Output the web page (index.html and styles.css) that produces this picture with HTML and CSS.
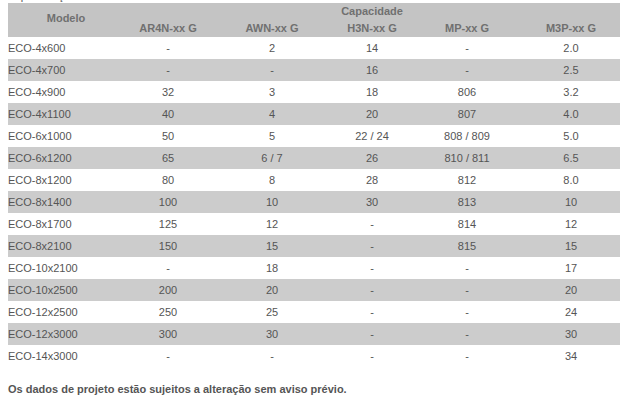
FILE: index.html
```html
<!DOCTYPE html>
<html lang="pt">
<head>
<meta charset="utf-8">
<link rel="stylesheet" href="styles.css">
</head>
<body>
<div class="page">
  <p class="cut">Especificação</p>
  <table class="spec">
    <colgroup>
      <col class="c-model"><col class="c1"><col class="c2"><col class="c3"><col class="c4"><col class="c5">
    </colgroup>
    <thead>
      <tr><th rowspan="2" class="model">Modelo</th><th colspan="5" class="cap">Capacidade</th></tr>
      <tr><th>AR4N-xx G</th><th>AWN-xx G</th><th>H3N-xx G</th><th>MP-xx G</th><th>M3P-xx G</th></tr>
    </thead>
    <tbody>
      <tr><td>ECO-4x600</td><td>-</td><td>2</td><td>14</td><td>-</td><td>2.0</td></tr>
      <tr><td>ECO-4x700</td><td>-</td><td>-</td><td>16</td><td>-</td><td>2.5</td></tr>
      <tr><td>ECO-4x900</td><td>32</td><td>3</td><td>18</td><td>806</td><td>3.2</td></tr>
      <tr><td>ECO-4x1100</td><td>40</td><td>4</td><td>20</td><td>807</td><td>4.0</td></tr>
      <tr><td>ECO-6x1000</td><td>50</td><td>5</td><td>22 / 24</td><td>808 / 809</td><td>5.0</td></tr>
      <tr><td>ECO-6x1200</td><td>65</td><td>6 / 7</td><td>26</td><td>810 / 811</td><td>6.5</td></tr>
      <tr><td>ECO-8x1200</td><td>80</td><td>8</td><td>28</td><td>812</td><td>8.0</td></tr>
      <tr><td>ECO-8x1400</td><td>100</td><td>10</td><td>30</td><td>813</td><td>10</td></tr>
      <tr><td>ECO-8x1700</td><td>125</td><td>12</td><td>-</td><td>814</td><td>12</td></tr>
      <tr><td>ECO-8x2100</td><td>150</td><td>15</td><td>-</td><td>815</td><td>15</td></tr>
      <tr><td>ECO-10x2100</td><td>-</td><td>18</td><td>-</td><td>-</td><td>17</td></tr>
      <tr><td>ECO-10x2500</td><td>200</td><td>20</td><td>-</td><td>-</td><td>20</td></tr>
      <tr><td>ECO-12x2500</td><td>250</td><td>25</td><td>-</td><td>-</td><td>24</td></tr>
      <tr><td>ECO-12x3000</td><td>300</td><td>30</td><td>-</td><td>-</td><td>30</td></tr>
      <tr><td>ECO-14x3000</td><td>-</td><td>-</td><td>-</td><td>-</td><td>34</td></tr>
    </tbody>
  </table>
  <p class="note">Os dados de projeto estão sujeitos a alteração sem aviso prévio.</p>
</div>
</body>
</html>
```

FILE: styles.css
```css
html, body {
  margin: 0;
  padding: 0;
  background: #ffffff;
}
.page {
  padding: 0 8px;
  font-family: "Liberation Sans", Arial, sans-serif;
  font-size: 11px;
  color: #555555;
}
.cut {
  margin: -10px 0 0 0;
  height: 13px;
  line-height: 13px;
  font-size: 11px;
  color: #555555;
}
.spec {
  border-collapse: collapse;
  width: 612px;
  table-layout: fixed;
}
.c-model { width: 116px; }
.c1 { width: 88px; }
.c2 { width: 120px; }
.c3 { width: 80px; }
.c4 { width: 110px; }
.c5 { width: 98px; }
.spec thead th {
  background: #c4c4c4;
  color: #707070;
  font-weight: bold;
  height: 17px;
  padding: 0;
  line-height: 17px;
  text-align: center;
  vertical-align: bottom;
}
.spec thead th.model {
  line-height: 30px;
  height: 34px;
  vertical-align: top;
}
.spec thead th.cap {
  vertical-align: middle;
}
.spec td {
  height: 22px;
  padding: 0;
  text-align: center;
  vertical-align: middle;
}
.spec td:first-child {
  text-align: left;
}
.spec tbody tr:nth-child(even) td {
  background: #cccccc;
}
.note {
  margin: 14px 0 0 0;
  font-weight: bold;
  color: #555555;
  line-height: 16px;
}
```
